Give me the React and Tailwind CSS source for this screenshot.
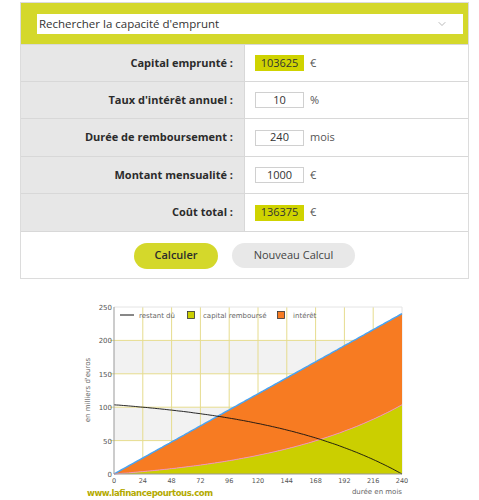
import { ChevronDown } from "lucide-react";

const P = 103625;
const r = 0.1 / 12;
const M = 1000;
const N = 240;

const X0 = 114;
const Y0 = 474;
const sx = (n) => X0 + n * 1.2;
const sy = (k) => Y0 - k * 0.668;

const pts = [];
for (let n = 0; n <= N; n += 2) {
  const g = Math.pow(1 + r, n);
  const rest = Math.max(0, P * g - (M * (g - 1)) / r);
  pts.push({ n, rest: rest / 1000, cap: (P - rest) / 1000, tot: (n * M) / 1000 });
}
const line = (key) => pts.map((p, i) => `${i ? "L" : "M"}${sx(p.n).toFixed(1)},${sy(p[key]).toFixed(1)}`).join(" ");
const capLine = line("cap");
const totLine = line("tot");
const restLine = line("rest");
const capArea = `${capLine} L${sx(N)},${Y0} L${X0},${Y0} Z`;
const intArea =
  totLine +
  " " +
  [...pts].reverse().map((p) => `L${sx(p.n).toFixed(1)},${sy(p.cap).toFixed(1)}`).join(" ") +
  " Z";

const rows = [
  { label: "Capital emprunté :", value: "103625", unit: "€", hi: true, h: "h-[37px]" },
  { label: "Taux d'intérêt annuel :", value: "10", unit: "%", h: "h-[37px]" },
  { label: "Durée de remboursement :", value: "240", unit: "mois", h: "h-[38px]" },
  { label: "Montant mensualité :", value: "1000", unit: "€", h: "h-[37px]" },
  { label: "Coût total :", value: "136375", unit: "€", hi: true, h: "h-[38px]" },
];

const Chart = () => (
  <svg width="479" height="210" viewBox="0 290 479 210" className="block" style={{ fontFamily: "'DejaVu Sans', sans-serif" }}>
    <rect x={X0} y={sy(200)} width={288} height={sy(150) - sy(200)} fill="#f2f2f2" />
    <rect x={X0} y={sy(100)} width={288} height={sy(50) - sy(100)} fill="#f2f2f2" />
    {[1, 2, 3, 4, 5, 6, 7, 8, 9].map((k) => (
      <line key={k} x1={sx(k * 24)} x2={sx(k * 24)} y1={sy(250)} y2={Y0} stroke="#e6dc8e" strokeWidth="1" />
    ))}
    {[50, 100, 150, 200].map((v) => (
      <line key={v} x1={X0 - 4} x2={sx(N)} y1={sy(v)} y2={sy(v)} stroke="#e6dc8e" strokeWidth="1" />
    ))}
    <line x1={X0} x2={sx(N)} y1={sy(250)} y2={sy(250)} stroke="#e4e4e4" />
    <line x1={sx(N)} x2={sx(N)} y1={sy(250)} y2={Y0} stroke="#e4e4e4" />
    <path d={intArea} fill="#f77b22" />
    <path d={capArea} fill="#cbcf00" />
    <path d={totLine} fill="none" stroke="#4aa3f0" strokeWidth="1.5" />
    <path d={capLine} fill="none" stroke="#f08fc0" strokeWidth="1" />
    <path d={restLine} fill="none" stroke="#111" strokeWidth="0.9" />
    <line x1={X0} x2={X0} y1={sy(250)} y2={Y0} stroke="#999" />
    <line x1={X0} x2={sx(N)} y1={Y0} y2={Y0} stroke="#999" />
    {[0, 50, 100, 150, 200, 250].map((v) => (
      <text key={v} x={X0 - 2} y={sy(v) + 3} fontSize="7" fill="#555" textAnchor="end">
        {v}
      </text>
    ))}
    {[0, 24, 48, 72, 96, 120, 144, 168, 192, 216, 240].map((m) => (
      <text key={m} x={sx(m)} y={483} fontSize="6.5" fill="#555" textAnchor="middle">
        {m}
      </text>
    ))}
    <text x={402} y={494} fontSize="7" fill="#666" textAnchor="end">
      durée en mois
    </text>
    <text x={90} y={390} fontSize="7" fill="#666" textAnchor="middle" transform="rotate(-90 90 390)">
      en milliers d'euros
    </text>
    <line x1="120" x2="134" y1="315" y2="315" stroke="#111" strokeWidth="1" />
    <text x="139" y="318" fontSize="7" fill="#666">restant dû</text>
    <rect x="187.5" y="311.5" width="7" height="7" fill="#cbcf00" stroke="#333" strokeWidth="0.8" />
    <text x="203" y="318" fontSize="7" fill="#666">capital remboursé</text>
    <rect x="277.5" y="311.5" width="7" height="7" fill="#f77b22" stroke="#333" strokeWidth="0.8" />
    <text x="293" y="318" fontSize="7" fill="#666">intérêt</text>
    <text x="87" y="496" fontSize="8.5" fontWeight="bold" fill="#b3aa00" textLength="126" lengthAdjust="spacing">
      www.lafinancepourtous.com
    </text>
  </svg>
);

export default function App() {
  return (
    <div className="w-[479px] bg-white pt-[2px] font-['Open_Sans',sans-serif] text-[#333]">
      <div className="ml-[20px] w-[449px] border border-[#dcdcdc]">
        <div className="flex h-[41px] items-center bg-[#d4d82b] pl-[16px] pr-[5px]">
          <div className="flex h-[20px] w-full items-center justify-between bg-white pl-[2px] pr-[14px] text-[11.5px] text-[#333]">
            <span>Rechercher la capacité d'emprunt</span>
            <ChevronDown className="h-[12px] w-[14px] text-[#888]" strokeWidth={1.2} />
          </div>
        </div>
        {rows.map((row) => (
          <div key={row.label} className={`flex border-t border-[#d8d8d8] ${row.h}`}>
            <div className="flex w-[224px] items-center justify-end border-r border-[#d8d8d8] bg-[#e7e7e7] pr-[11px] text-[11px] font-bold text-[#2b2b2b]">
              {row.label}
            </div>
            <div className="flex items-center gap-[6px] pl-[10px] text-[11px] text-[#555]">
              <div
                className={`flex h-[16px] w-[49px] items-center justify-center border text-[11px] ${
                  row.hi ? "border-[#cfd300] bg-[#cfd300] text-[#333]" : "border-[#d0d0d0] bg-white text-[#333]"
                }`}
              >
                {row.value}
              </div>
              <span>{row.unit}</span>
            </div>
          </div>
        ))}
        <div className="flex h-[47px] items-center justify-center gap-[14px] border-t border-[#d8d8d8] pt-[1px]">
          <button className="h-[26px] w-[84px] rounded-full bg-[#d4d82b] text-[11px] font-semibold text-[#2b2b2b]">
            Calculer
          </button>
          <button className="h-[25px] w-[123px] rounded-full bg-[#e8e8e8] text-[11px] text-[#444]">
            Nouveau Calcul
          </button>
        </div>
      </div>
      <div className="mt-[11px]">
        <Chart />
      </div>
    </div>
  );
}
